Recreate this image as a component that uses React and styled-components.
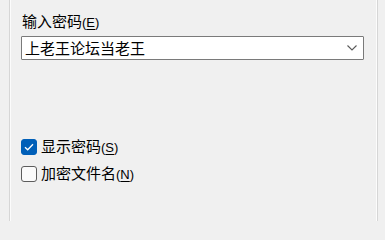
import styled, { createGlobalStyle } from 'styled-components';

const GlobalStyle = createGlobalStyle`
  html, body {
    margin: 0;
    padding: 0;
    background: #f0f0f0;
  }
  body {
    font-family: "Noto Sans CJK SC", "Noto Sans", sans-serif;
    color: #000;
  }
`;

const Frame = styled.div`
  box-sizing: border-box;
  margin-left: 9px;
  width: 369px;
  height: 221px;
  border-left: 1px solid #d6d6d6;
  border-right: 1px solid #d6d6d6;
  box-shadow: inset 1px 0 0 #fcfcfc, inset -1px 0 0 #fcfcfc;
  padding: 11px 0 0 11px;
  display: flex;
  flex-direction: column;
`;

const Label = styled.div`
  font-size: 15px;
  line-height: 20px;
  height: 20px;
  padding-left: 1px;
`;

const Key = styled.span`
  font-family: "Liberation Sans", "Noto Sans", sans-serif;
  font-size: 13px;
`;

const Mnemonic = styled.span`
  text-decoration: underline;
  text-underline-offset: 2px;
`;

const Combo = styled.div`
  box-sizing: border-box;
  margin-top: 5px;
  width: 343px;
  height: 24px;
  border: 1px solid #7a7a7a;
  border-radius: 1px;
  background: #fff;
  display: flex;
  align-items: center;
  justify-content: space-between;
  padding: 0 6px 0 3px;
  font-size: 15px;
  line-height: 20px;
`;

const Options = styled.div`
  margin-top: 79px;
  display: flex;
  flex-direction: column;
  gap: 11px;
`;

const Row = styled.label`
  display: flex;
  align-items: center;
  gap: 4px;
  font-size: 15px;
  line-height: 16px;
  height: 16px;
`;

const Box = styled.span`
  box-sizing: border-box;
  width: 16px;
  height: 16px;
  border-radius: 3px;
  border: 1px solid ${p => (p.$checked ? '#005fb8' : '#5d5d5d')};
  background: ${p => (p.$checked ? '#005fb8' : '#fbfbfb')};
  display: flex;
  align-items: center;
  justify-content: center;
`;

const Chevron = () => (
  <svg width="10" height="6" viewBox="0 0 10 6">
    <path d="M0.5 0.5 L5 5 L9.5 0.5" fill="none" stroke="#5a5a5a" strokeWidth="1.1" />
  </svg>
);

const Tick = () => (
  <svg width="10" height="8" viewBox="0 0 10 8">
    <path d="M1 4.2 L3.7 6.8 L9 1.2" fill="none" stroke="#fff" strokeWidth="1.3" />
  </svg>
);

const Check = ({ checked, text, k }) => (
  <Row>
    <Box $checked={checked}>{checked && <Tick />}</Box>
    <span>
      {text}
      <Key>(<Mnemonic>{k}</Mnemonic>)</Key>
    </span>
  </Row>
);

export default function App() {
  return (
    <>
      <GlobalStyle />
      <Frame>
        <Label>
          输入密码<Key>(<Mnemonic>E</Mnemonic>)</Key>
        </Label>
        <Combo>
          <span>上老王论坛当老王</span>
          <Chevron />
        </Combo>
        <Options>
          <Check checked text="显示密码" k="S" />
          <Check text="加密文件名" k="N" />
        </Options>
      </Frame>
    </>
  );
}
